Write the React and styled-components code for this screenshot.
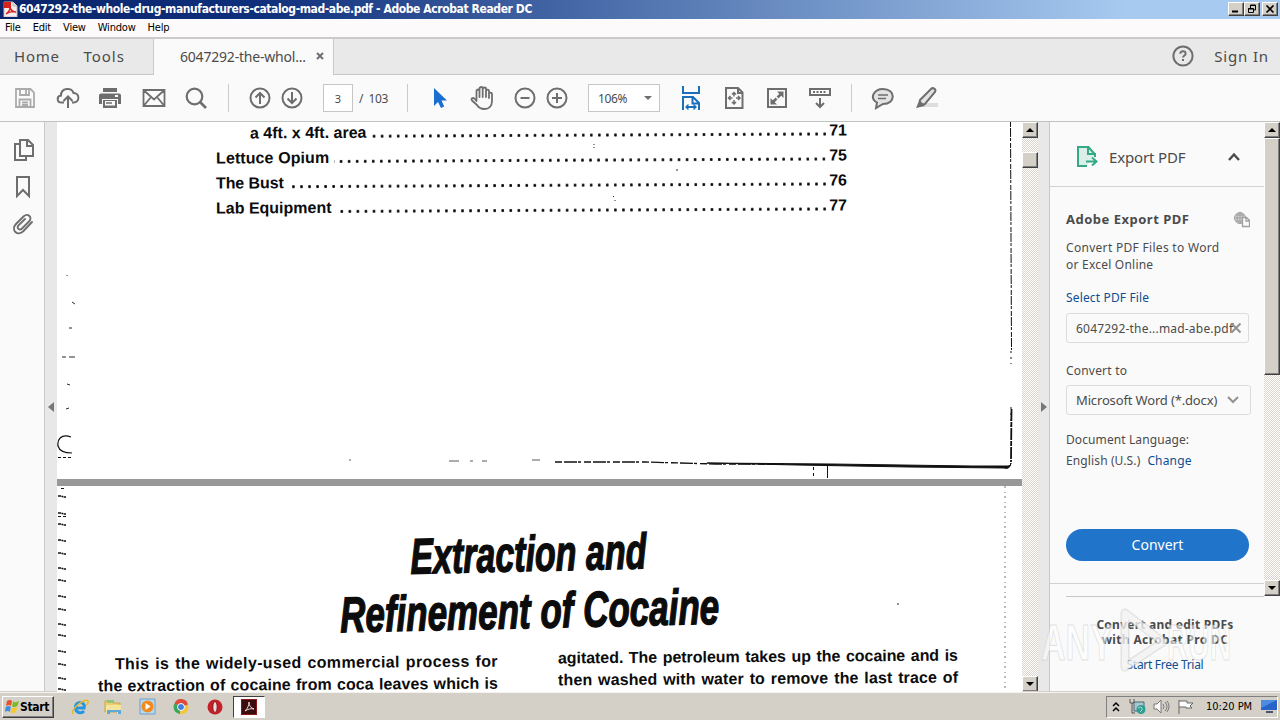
import React from 'react'
import styled, { createGlobalStyle, css } from 'styled-components'

const GlobalStyle = createGlobalStyle`
  * {
    box-sizing: border-box;
  }

  body {
    margin: 0;
    overflow: hidden;
    font-family: 'Noto Sans', 'Open Sans', sans-serif;
    color: #4b4b4b;
  }

  svg {
    display: block;
    flex: none;
  }
`

const Window = styled.div`
  display: flex;
  flex-direction: column;
  width: 1280px;
  height: 720px;
  background: #fafafa;
  white-space: nowrap;
`

const raised = css`
  background: #d4d0c8;
  border: 1px solid;
  border-color: #fff #404040 #404040 #fff;
  box-shadow: inset -1px -1px 0 #808080;
`

const Text = styled.span`
  font-size: ${p => p.size || 13}px;
  font-weight: ${p => p.weight || 400};
  letter-spacing: ${p => p.spacing || 0}px;
  color: ${p => p.color || '#4b4b4b'};
  margin-left: ${p => p.left || 0}px;
`

/* Title bar and menu */

const TitleBar = styled.header`
  display: flex;
  align-items: center;
  height: 19px;
  padding: 0 2px 1px 3px;
  background: linear-gradient(90deg, #0a246a 0%, #0f2f7c 20%, #a6caf0 88%);
`

const WindowTitle = styled.h1`
  flex: 1;
  margin: 0 0 0 1px;
  font: 700 12px 'DejaVu Sans Condensed', 'DejaVu Sans', sans-serif;
  font-stretch: condensed;
  letter-spacing: -0.4px;
  color: #fff;
`

const WindowButton = styled.button`
  ${raised};
  display: flex;
  align-items: center;
  justify-content: center;
  width: 16px;
  height: 14px;
  padding: 0;
  margin-left: ${p => p.gap || 0}px;
`

const MenuBar = styled.nav`
  display: flex;
  align-items: center;
  height: 20px;
  padding: 0 5px 2px;
  gap: 12px;
  border-bottom: 2px solid #cbcbcb;
  background: #fcfafa;
  font: 11px 'DejaVu Sans Condensed', sans-serif;
  font-stretch: condensed;
  letter-spacing: -0.2px;
  color: #000;
`

/* Tabs */

const TabBar = styled.div`
  display: flex;
  height: 36px;
  background: #e9e9e9;
`

const TabGroup = styled.div`
  display: flex;
  align-items: center;
  width: ${p => p.width ? `${p.width}px` : 'auto'};
  flex: ${p => p.width ? 'none' : 1};
  justify-content: ${p => p.end ? 'flex-end' : 'flex-start'};
  padding: 0 11px 2px 14px;
  border-bottom: 1px solid #c6c6c6;
`

const ActiveTab = styled.div`
  display: flex;
  align-items: center;
  width: 181px;
  padding: 0 9px 2px 26px;
  justify-content: space-between;
  background: #fafafa;
  border: solid #c9c9c9;
  border-width: 0 1px;
`

/* Toolbar */

const Toolbar = styled.div`
  display: flex;
  align-items: center;
  height: 47px;
  padding-left: 12px;
  border-bottom: 1px solid #bfc3bf;
  color: #6e6e6e;
`

const Tool = styled.button`
  display: flex;
  align-items: center;
  justify-content: center;
  width: 26px;
  height: 32px;
  padding: 0;
  border: 0;
  background: none;
  color: ${p => p.color || 'inherit'};
  margin-left: ${p => p.gap || 0}px;
`

const Divider = styled.span`
  width: 1px;
  height: 28px;
  background: #cacaca;
  margin-left: ${p => p.gap}px;
`

const Field = styled.div`
  display: flex;
  align-items: center;
  justify-content: ${p => p.spread ? 'space-between' : 'center'};
  width: ${p => p.width}px;
  height: 28px;
  padding: 0 ${p => p.spread ? 7 : 0}px 0 ${p => p.spread ? 9 : 0}px;
  margin-left: ${p => p.gap}px;
  border: 1px solid #c6c6c6;
  background: #fff;
`

/* Workspace */

const Main = styled.main`
  display: flex;
  height: 570px;
`

const SideRail = styled.aside`
  display: flex;
  flex-direction: column;
  align-items: center;
  gap: 13px;
  width: 45px;
  padding: 16px 0 0 2px;
  border-right: 1px solid #c8c8c8;
`

const Gutter = styled.div`
  display: flex;
  align-items: center;
  justify-content: center;
  width: ${p => p.width}px;
  background: #e8e8e8;
`

const ScrollTrack = styled.div`
  display: flex;
  flex-direction: column;
  width: 16px;
  height: ${p => p.height}px;
  background: repeating-conic-gradient(#d8d3cb 0 25%, #fff 0 50%) 0 0 / 2px 2px;
`

const ScrollButton = styled.button`
  ${raised};
  display: flex;
  align-items: center;
  justify-content: center;
  width: 16px;
  height: 16px;
  padding: 0;
  margin-top: ${p => p.end ? 'auto' : 0};
`

const Thumb = styled.div`
  ${raised};
  height: ${p => p.height}px;
  margin-top: ${p => p.offset}px;
`

const Document = styled.section`
  position: relative;
  width: 965px;
  overflow: hidden;
  background: #fff;
  color: #0c0c0c;
  font-family: 'Liberation Sans', Arial, sans-serif;
  font-weight: 700;
`

const ContentsPage = styled.div`
  height: 357px;
  padding-left: 159px;
`

const ContentsRow = styled.div`
  display: flex;
  align-items: baseline;
  width: 631px;
  height: 25.1px;
  padding-left: ${p => p.indent || 0}px;
  font-size: 16px;
  line-height: 20px;
  letter-spacing: ${p => p.spacing || 0}px;
  transform: rotate(-0.28deg);
`

const Leader = styled.span`
  flex: 1;
  height: 3px;
  margin: 0 1px 0 ${p => p.gap}px;
  background: radial-gradient(circle at 50% 50%, #0c0c0c 1.2px, transparent 1.7px) right 0 / 8.06px 3px repeat-x;
`

const PageNumber = styled.span`
  letter-spacing: 0;
`

const PageGap = styled.div`
  height: 7px;
  background: #989898;
`

const ScanMarks = styled.svg`
  position: absolute;
  top: 0;
  left: 0;
`

const ArticlePage = styled.div`
  padding-top: 40px;
`

const ArticleTitle = styled.h2`
  width: 660px;
  height: 116px;
  margin: 0 0 0 142px;
  font-size: 50px;
  line-height: 57px;
  font-style: italic;
  font-weight: 700;
  text-align: center;
  transform: rotate(-1.3deg);
`

const TitleLine = styled.span`
  display: block;
  -webkit-text-stroke: 1.4px #0c0c0c;
  transform: scaleX(${p => p.stretch});
`

const Columns = styled.div`
  display: flex;
  gap: 60px;
  padding-left: 41px;
`

const Column = styled.div`
  width: 400px;
  margin-top: ${p => p.top}px;
  transform: rotate(-0.4deg);
`

const Line = styled.p`
  margin: 0;
  padding-left: ${p => p.indent || 0}px;
  font-size: 16px;
  line-height: 22px;
  letter-spacing: ${p => p.spacing || 0}px;
  text-align-last: justify;
`

/* Export panel */

const Panel = styled.aside`
  position: relative;
  width: 215px;
  border-left: 1px solid #c8c8c8;
`

const PanelHeader = styled.div`
  display: flex;
  align-items: center;
  height: 65px;
  padding: 5px 23px 0 26px;
  border-bottom: 1px solid #d2d2d2;
`

const PanelBody = styled.div`
  display: flex;
  flex-direction: column;
  height: 397px;
  padding: 21px 14px 0 16px;
  border-bottom: 1px solid #d2d2d2;
`

const PanelRow = styled.div`
  display: flex;
  align-items: center;
  justify-content: ${p => p.spread ? 'space-between' : 'flex-start'};
  height: ${p => p.height || 17}px;
  margin-top: ${p => p.top || 0}px;
`

const Box = styled.div`
  display: flex;
  flex: none;
  align-items: center;
  justify-content: space-between;
  width: ${p => p.width}px;
  height: 30px;
  margin-top: ${p => p.top}px;
  padding: 0 ${p => p.end}px 0 9px;
  border: 1px solid #dcdcdc;
  border-radius: 3px;
`

const ConvertButton = styled.button`
  width: 183px;
  height: 32px;
  margin-top: 60px;
  padding: 0 0 1px;
  border: 0;
  border-radius: 16px;
  background: #2074ca;
  color: #fff;
  font: 14px 'Noto Sans', sans-serif;
`

const Promo = styled.div`
  display: flex;
  flex-direction: column;
  align-items: center;
  margin: 12px 0 0 16px;
  padding-top: 20px;
  border-top: 1px solid #c8c8c8;
  line-height: 15px;
`

const PromoLink = styled.a`
  margin-top: 10px;
  font-size: 12px;
  letter-spacing: -0.3px;
  color: #0d4f8f;
`

const Watermark = styled.svg`
  position: absolute;
  left: -12px;
  top: 484px;
`

/* Taskbar */

const Taskbar = styled.footer`
  display: flex;
  align-items: center;
  height: 28px;
  padding: 0 2px;
  border-top: 1px solid #f5f3ef;
  box-shadow: 0 -1px 0 #d4d0c8;
  background: #d4d0c8;
  color: #000;
`

const StartButton = styled.button`
  ${raised};
  display: flex;
  align-items: center;
  width: 52px;
  height: 22px;
  padding: 0 2px;
  font: 700 12px 'DejaVu Sans Condensed', sans-serif;
  font-stretch: condensed;
  letter-spacing: -0.3px;
`

const Launcher = styled.div`
  display: flex;
  align-items: center;
  justify-content: center;
  width: 32px;
  height: 22px;
  margin-left: ${p => p.gap || 0}px;
  ${p => p.active && css`
    background: #fff;
    border: 1px solid;
    border-color: #404040 #fff #fff #404040;
  `}
`

const Tray = styled.div`
  display: flex;
  align-items: center;
  width: 172px;
  height: 22px;
  margin-left: auto;
  padding: 0 1px 0 4px;
  border: 1px solid;
  border-color: #808080 #fff #fff #808080;
`

const Clock = styled.time`
  margin: 0 9px 0 12px;
  font: 11px 'DejaVu Sans Condensed', sans-serif;
  font-stretch: condensed;
`

const TrayIcon = styled.svg`
  margin-left: ${p => p.$gap || 0}px;
`

const Icon = ({ w = 24, h = 24, sw = 2, fill = 'none', children, ...rest }) => (
  <svg width={w} height={h} viewBox={`0 0 ${w} ${h}`} fill={fill} stroke="currentColor" strokeWidth={sw} {...rest}>
    {children}
  </svg>
)

const Triangle = ({ d, color = '#000', w = 8, h = 8 }) => (
  <svg width={w} height={h} viewBox={`0 0 ${w} ${h}`}><path d={d} fill={color} /></svg>
)

const PdfIcon = () => (
  <svg width="15" height="16" viewBox="0 0 15 16">
    <path d="M1 1h9l4 4v11H1z" fill="#f6eeee" stroke="#c9b9b9" />
    <path d="M0 1h8v6H0z" fill="#d8231c" />
    <path d="M3 13c3-2 4-5 4-7 1 4 3 5 6 5-4-1-7 0-10 2z" stroke="#d8231c" strokeWidth="1.400" fill="none" />
    <path d="M10 1v4h4" fill="#ddd" stroke="#bbb" />
  </svg>
)

const contents = [
  { label: 'a 4ft. x 4ft. area', page: 71, indent: 34, spacing: 0, gap: 1 },
  { label: 'Lettuce Opium', page: 75, spacing: 0.1, gap: 5 },
  { label: 'The Bust', page: 76, spacing: -0.1, gap: 3 },
  { label: 'Lab Equipment', page: 77, spacing: 0, gap: 3 },
]

// edge residue down the left side of the second page
const edgeMarks = [375, 392, 403, 419, 432, 447, 459, 475, 488, 503, 514, 530, 543, 557, 568]

function Titles() {
  return (
    <>
      <TitleBar>
        <PdfIcon />
        <WindowTitle>6047292-the-whole-drug-manufacturers-catalog-mad-abe.pdf - Adobe Acrobat Reader DC</WindowTitle>
        <WindowButton><Icon w={10} h={8} stroke="#000"><path d="M1 6.500h6" /></Icon></WindowButton>
        <WindowButton>
          <Icon w={10} h={10} sw={1} stroke="#000"><path d="M3.500 4V1h5v5H6M3 1.500h6M1.500 4.500h5v4h-5zM1 5h6" /></Icon>
        </WindowButton>
        <WindowButton gap={2}><Icon w={10} h={8} sw={1.600} stroke="#000"><path d="M1.500.5l7 7m0-7l-7 7" /></Icon></WindowButton>
      </TitleBar>
      <MenuBar>
        <span>File</span><span>Edit</span><span>View</span><span>Window</span><span>Help</span>
      </MenuBar>
      <TabBar>
        <TabGroup width={153}>
          <Text size={15} spacing={0.8}>Home</Text>
          <Text size={15} spacing={1} left={23.5}>Tools</Text>
        </TabGroup>
        <ActiveTab>
          <Text size={14} spacing={-0.2}>6047292-the-whol...</Text>
          <Icon w={8} h={8} color="#6e6e6e"><path d="M1 1l6 6m0-6l-6 6" /></Icon>
        </ActiveTab>
        <TabGroup end>
          <Icon w={22} h={22} color="#6e6e6e">
            <circle cx="11" cy="11" r="9.600" />
            <path d="M8.300 8.800c0-3.600 5.600-3.400 5.300 0-.2 1.700-2.600 1.700-2.600 3.800M11 14v2" />
          </Icon>
          <Text size={15} spacing={0.85} left={20}>Sign In</Text>
        </TabGroup>
      </TabBar>
    </>
  )
}

function Tools() {
  return (
    <Toolbar>
      <Tool color="#ababab">
        <Icon w={22} h={22} sw={1.800}><path d="M2 2h14.500L20 5.500V20H2zM6 2v6h9V2M12 3v4M5.500 20v-7.500h11V20M8 15.500h6M8 18h6" /></Icon>
      </Tool>
      <Tool gap={17}>
        <Icon><path d="M8 16.500H5.500C.5 16.500.5 10 5 9.500 5 1.500 16 1 17.500 7c6.500 0 6.500 9.500 0 9.500H16M12 22V10.500M7.500 15l4.500-4.500 4.500 4.500" /></Icon>
      </Tool>
      <Tool gap={16}>
        <Icon w={22} h={22} fill="currentColor" stroke="none">
          <path d="M4 1h14v4H4zM2 6.500h18a2 2 0 0 1 2 2V17h-3v-5H3v5H0V8.500a2 2 0 0 1 2-2zM4 13h14v8H4z" />
          <path d="M6 14h10v4.500H6z" fill="#fafafa" />
          <path d="M7 16h6" stroke="currentColor" strokeWidth="1.500" />
          <path d="M16 9h3" stroke="#fafafa" />
        </Icon>
      </Tool>
      <Tool gap={18}>
        <Icon w={24} h={20} sw={1.800}><path d="M1.500 2h21v16h-21zM2 2.500l10 9 10-9M2 17.500L9 9M22 17.500L15 9" /></Icon>
      </Tool>
      <Tool gap={16}>
        <Icon w={22} h={22} sw={2.200}><circle cx="9.500" cy="9.500" r="7.800" /><path d="M15 15l6 6" strokeWidth="2.600" /></Icon>
      </Tool>
      <Divider gap={19} />
      <Tool gap={18}><Icon><circle cx="12" cy="12" r="9.500" /><path d="M12 18V7M7.500 11.500L12 7l4.500 4.500" /></Icon></Tool>
      <Tool gap={6}><Icon><circle cx="12" cy="12" r="9.500" /><path d="M12 6v11M7.500 12.500L12 17l4.500-4.500" /></Icon></Tool>
      <Field width={30} gap={18}><Text size={11}>3</Text></Field>
      <Text size={12} spacing={-0.4} left={6}>/&nbsp; 103</Text>
      <Divider gap={19} />
      <Tool gap={19} color="#1b6fd0">
        <Icon w={14} h={22} fill="currentColor" stroke="none"><path d="M1 1v18l4-4 3 6 3.200-1.500L8.500 13.500H14z" /></Icon>
      </Tool>
      <Tool gap={16}>
        <Icon w={24} h={26} sw={1.800} strokeLinejoin="round" strokeLinecap="round">
          <path d="M6.500 15V6c0-2 3-2 3 0v6M9.500 6V3.500c0-2 3.200-2 3.200 0V12M12.700 4c0-2 3.300-2 3.300 0v8M16 6c0-1.800 3-1.800 3 0v7M19 9c0-1.800 3-1.800 3 0v7c0 5-3 8-7.500 8-4 0-6-1.500-7.500-4L2 15.500c-1.300-2 .8-3.200 2.300-2L6.500 16" />
        </Icon>
      </Tool>
      <Tool gap={17}><Icon><circle cx="12" cy="12" r="9.500" /><path d="M7.500 12h9" /></Icon></Tool>
      <Tool gap={6}><Icon><circle cx="12" cy="12" r="9.500" /><path d="M7 12h10M12 7v10" /></Icon></Tool>
      <Field width={72} gap={18} spread>
        <Text size={12} spacing={-0.3}>106%</Text>
        <Triangle d="M0 2h8L4 6z" color="#6e6e6e" />
      </Field>
      <Tool gap={18} color="#1b6fb8">
        <Icon w={20} h={26}>
          <path d="M2 1v7h16V1M2 25V12h10l6 6v7M11.500 12v6.500H18M5 22h10" />
          <path d="M7.500 19.500L5 22l2.500 2.500M12.500 19.500L15 22l-2.500 2.500" strokeWidth="1.400" />
        </Icon>
      </Tool>
      <Tool gap={17}>
        <Icon w={20} h={24}>
          <path d="M2 2h12l4.500 4.500V22H2zM14 2v5h4" />
          <path d="M10 6.500v4M10 14v4M4.500 12h4M12 12h4M8 8.500l2-2 2 2M8 16l2 2 2-2M6.500 10l-2 2 2 2M14 10l2 2-2 2" strokeWidth="1.500" />
        </Icon>
      </Tool>
      <Tool gap={17}>
        <Icon w={22} h={22}>
          <path d="M2 2h18v18H2z" />
          <path d="M11 4.500h6.500V11zM4.500 11v6.500H11z" fill="currentColor" stroke="none" />
          <path d="M11.500 10.500l3.500-3.500M7 15l3.500-3.500" strokeWidth="2.500" />
        </Icon>
      </Tool>
      <Tool gap={17}>
        <Icon><path d="M2 3h20v6H2zM12 12v9M8 17l4 4 4-4" /><path d="M5 6h14" strokeDasharray="2 1.500" /></Icon>
      </Tool>
      <Divider gap={18} />
      <Tool gap={18}>
        <Icon><path d="M12 3c13 0 13 15 0 15L5 22l1-5.500C-2 12 3 3 12 3z" fill="#e3e3e3" /><path d="M7 9h10M7 12.500h8" strokeWidth="1.500" /></Icon>
      </Tool>
      <Tool gap={17}>
        <Icon>
          <path d="M12 17h12v4H9z" fill="#dedede" stroke="none" />
          <path d="M6 14L17 3c2-2 5.500 0 4 3L11 18c-2 1-6-1-5-4z" fill="#e3e3e3" />
          <path d="M5 15l6 5-9 2z" fill="currentColor" stroke="none" />
        </Icon>
      </Tool>
    </Toolbar>
  )
}

function Pages() {
  return (
    <Document>
      <ContentsPage>
        {contents.map(row => (
          <ContentsRow key={row.page} indent={row.indent} spacing={row.spacing}>
            {row.label}<Leader gap={row.gap} /><PageNumber>{row.page}</PageNumber>
          </ContentsRow>
        ))}
      </ContentsPage>
      <PageGap />
      <ArticlePage>
        <ArticleTitle>
          <TitleLine stretch={0.68}>Extraction and</TitleLine>
          <TitleLine stretch={0.7}>Refinement of Cocaine</TitleLine>
        </ArticleTitle>
        <Columns>
          <Column top={10}>
            <Line indent={17} spacing={0.35}>This is the widely-used commercial process for</Line>
            <Line spacing={0.1}>the extraction of cocaine from coca leaves which is</Line>
          </Column>
          <Column top={4}>
            <Line spacing={-0.05}>agitated. The petroleum takes up the cocaine and is</Line>
            <Line spacing={0.1}>then washed with water to remove the last trace of</Line>
          </Column>
        </Columns>
      </ArticlePage>
      <ScanMarks width="965" height="570" fill="none" stroke="#111">
        <path d="M953.500 0l1 228" strokeDasharray="5 1 9 1 3 2" />
        <path d="M954 229v13M954 285v24" strokeDasharray="2 4" />
        <path d="M954.500 287l-.5 53" strokeWidth="1.800" strokeDasharray="12 1 5 1" />
        <path d="M498 340h90l70 2h70" strokeDasharray="7 2 13 1 3 3" strokeWidth="1.300" />
        <path d="M650 341l125 1 140 2h36q3 0 3-3-1 7-7 5l-95-1-112-2z" fill="#111" />
        <path d="M770.500 343v13" />
        <path d="M756.500 345v11" strokeDasharray="3 3" />
        <path d="M292 338h2M392 339h10M413 339h3M425 339h5M475 338h8" strokeWidth=".7" />
        <path d="M14 315C4 311 0 318 1 324q2 7 14 7" strokeWidth="1.200" />
        <path d="M1 335.500h15M4 366.500h4M1 394.500h8" strokeDasharray="3 2" />
        <path d="M10 153v1M15 180l3 2M12 206h3M5 235h4M12 235h6M10 262l3 1M9 287l3-1M537 22v1M537 25v1M619 48h2M556 74l1 1M558 78v1M840 482h2" strokeWidth=".9" />
        <path d="M948 364v207" strokeDasharray="2 4 1 3" stroke="#777" />
        {edgeMarks.map(y => <path key={y} d={`M1 ${y - 1}h3l3 1h2`} strokeWidth="1.600" strokeDasharray="3 .5 2 .5" />)}
      </ScanMarks>
    </Document>
  )
}

function ExportPanel() {
  return (
    <Panel>
      <PanelHeader>
        <Icon w={22} h={24} color="#35a985">
          <path d="M19 9.500L12.500 2H2v19h9M12 2v7h7v3" fill="#dceee8" />
          <path d="M10 16.500h10M16 12.500l4.500 4-4.500 4" />
        </Icon>
        <Text size={15} spacing={-0.15} left={11}>Export PDF</Text>
        <Icon w={14} h={9} sw={2.400} style={{ marginLeft: 'auto' }}><path d="M2 8l5-5.500L12 8" /></Icon>
      </PanelHeader>
      <PanelBody>
        <PanelRow height={22} spread>
          <Text size={13} weight={700} spacing={0.5}>Adobe Export PDF</Text>
          <Icon w={17} h={17} sw={1} color="#a0a0a0">
            <circle cx="7" cy="7" r="5.500" fill="#d2d2d2" />
            <path d="M1.500 7h11M7 1.500v11M3 4h8M3 10h6M7 1.500c-4 3-4 8 0 11M7 1.500c4 3 4 8 0 11" />
            <path d="M9.500 6.500h4l3 3v6h-7zM13 7v3h3" fill="#fafafa" strokeWidth="1.300" />
          </Icon>
        </PanelRow>
        <PanelRow top={9}><Text size={12} spacing={0.3}>Convert PDF Files to Word</Text></PanelRow>
        <PanelRow><Text size={12} spacing={0.22}>or Excel Online</Text></PanelRow>
        <PanelRow top={16}><Text size={12} color="#0d4f8f" spacing={0.15}>Select PDF File</Text></PanelRow>
        <Box width={183} top={7} end={6}>
          <Text size={12} spacing={0.2}>6047292-the...mad-abe.pdf</Text>
          <Icon w={12} h={12} color="#929292" style={{ marginLeft: -5 }}><path d="M1.500 1.500l9 9m0-9l-9 9" /></Icon>
        </Box>
        <PanelRow top={19}><Text size={12} spacing={0.2}>Convert to</Text></PanelRow>
        <Box width={185} top={6} end={11}>
          <Text size={13} spacing={-0.15}>Microsoft Word (*.docx)</Text>
          <Icon w={12} h={10} color="#929292"><path d="M1 2l5 5 5-5" /></Icon>
        </Box>
        <PanelRow top={16}><Text size={12} spacing={0.1}>Document Language:</Text></PanelRow>
        <PanelRow top={4}>
          <Text size={12} spacing={0.12}>English (U.S.)</Text>
          <Text size={12} color="#0d4f8f" left={7} spacing={0.15}>Change</Text>
        </PanelRow>
        <ConvertButton>Convert</ConvertButton>
      </PanelBody>
      <Promo>
        <Text size={12} weight={700} spacing={0.25}>Convert and edit PDFs</Text>
        <Text size={12} weight={700} spacing={0.35}>with Acrobat Pro DC</Text>
        <PromoLink>Start Free Trial</PromoLink>
      </Promo>
      <Watermark width="210" height="86" viewBox="0 0 210 86">
        <g fill="#fff" fillOpacity=".55" stroke="#aaa" strokeOpacity=".35" fontFamily="Liberation Sans, sans-serif" fontSize="50" fontWeight="700">
          <text x="3" y="54" textLength="72" lengthAdjust="spacingAndGlyphs">ANY</text>
          <text x="129" y="54" textLength="64" lengthAdjust="spacingAndGlyphs">RUN</text>
        </g>
        <path d="M87 7l38 29-38 25z" fill="none" stroke="#ccc" strokeOpacity=".5" strokeWidth="9" strokeLinejoin="round" />
        <path d="M87 7l38 29-38 25z" fill="none" stroke="#fff" strokeOpacity=".6" strokeWidth="6" strokeLinejoin="round" />
      </Watermark>
    </Panel>
  )
}

function Start() {
  return (
    <Taskbar>
      <StartButton>
        <svg width="15" height="15" viewBox="0 0 15 15">
          <path d="M2 2q3-2 5 0L6 7Q4 5 1 7z" fill="#e5532d" />
          <path d="M8 2.500q3 1.500 6-.5l-1.500 5q-3 2-5.500.5z" fill="#7fba2c" />
          <path d="M.8 8q3-2 5 0l-1 5q-2-2-5 0z" fill="#3f8fdc" />
          <path d="M7 8.500q2 1.500 5.300-.5L11 13q-3 2-5.200.5z" fill="#f8c92b" />
        </svg>
        Start
      </StartButton>
      <Launcher gap={10}>
        <svg width="18" height="18" viewBox="0 0 18 18" fill="none">
          <path d="M14.500 10H4.500c0 5 6 6 8.500 3M4.500 9c0-6 9-6 9 0" stroke="#2696df" strokeWidth="3" />
          <path d="M2 16C-1 12 14-1 17 3q1 2-2 4" stroke="#e7b928" strokeWidth="1.500" />
        </svg>
      </Launcher>
      <Launcher gap={1}>
        <svg width="18" height="18" viewBox="0 0 18 18">
          <path d="M1 3h6l2 2h7v9H1z" fill="#ecd06c" stroke="#c8a845" />
          <path d="M3 2h7v3H3z" fill="#8bc776" />
          <path d="M2 7h15v9h-4v-4H6v4H2z" fill="#f4e49c" />
          <path d="M3 12h14v4h-3v-2H6v2H3z" fill="#5fa9d6" />
        </svg>
      </Launcher>
      <Launcher gap={2}>
        <svg width="17" height="17" viewBox="0 0 17 17">
          <path d="M1 1h15v15H1z" fill="#b9d8ee" stroke="#6c9ec9" />
          <circle cx="8.500" cy="8.500" r="6" fill="#f28a1c" />
          <path d="M6.500 5v7l5-3.500z" fill="#fff" />
        </svg>
      </Launcher>
      <Launcher gap={2}>
        <svg width="16" height="16" viewBox="0 0 16 16">
          <path d="M8 8L1.500 4.500A7 7 0 0 1 15 6z" fill="#de4b3b" />
          <path d="M8 8L1.500 4.500A7 7 0 0 0 7 15z" fill="#3aa757" />
          <path d="M8 8l7-2.500A7 7 0 0 1 7 15z" fill="#f5c63a" />
          <circle cx="8" cy="8" r="3.500" fill="#3f7fe0" stroke="#fff" />
        </svg>
      </Launcher>
      <Launcher gap={2}>
        <svg width="16" height="16" viewBox="0 0 16 16">
          <circle cx="8" cy="8" r="7.500" fill="#c51f27" />
          <ellipse cx="8" cy="8" rx="2.200" ry="5.500" fill="#e8dcda" stroke="#8d1117" />
        </svg>
      </Launcher>
      <Launcher gap={2} active>
        <svg width="16" height="16" viewBox="0 0 16 16">
          <path d="M0 0h16v16H0z" fill="#3c0d0e" stroke="#8d1716" strokeWidth="2" />
          <path d="M4 12c3-3 4-6 4-9 0 4 2 6 5 7-3-.8-6 0-9 2z" fill="none" stroke="#e8d9d8" />
        </svg>
      </Launcher>
      <Tray>
        <Icon w={10} h={12} sw={1.500} stroke="#000"><path d="M2 5l3-3 3 3M2 10l3-3 3 3" /></Icon>
        <TrayIcon $gap={8} width="17" height="17" viewBox="0 0 17 17">
          <path d="M5 4h10v9H5z" fill="#a4c8d4" stroke="#4c6670" />
          <path d="M1 1v4h4V1M3 5v10h3" fill="none" stroke="#555" />
          <circle cx="12" cy="11.500" r="4.500" fill="#2e9e92" />
          <path d="M9 10q3-2 4 0t-2 4" stroke="#a5ddcd" fill="none" />
        </TrayIcon>
        <TrayIcon $gap={7} width="17" height="15" viewBox="0 0 17 15" fill="none" stroke="#777">
          <path d="M1 5h3l4-4v13l-4-4H1z" fill="#f8f8f8" />
          <path d="M10 5q2 2.500 0 5M12 3q4 4.500 0 9M14 2q4 5 0 11" />
        </TrayIcon>
        <TrayIcon $gap={7} width="17" height="16" viewBox="0 0 17 16" fill="#fff" stroke="#666">
          <path d="M2 1v14M2 2h8v2h6l-3 3 2 2H9V8H2" />
        </TrayIcon>
        <Clock>10:20 PM</Clock>
        <svg width="16" height="15" viewBox="0 0 16 15">
          <path d="M0 1h16v10H0z" fill="#2864c8" />
          <path d="M0 1h16L0 9z" fill="#4d8ce3" />
          <path d="M5 12h7v2H5z" fill="#4b5567" />
        </svg>
      </Tray>
    </Taskbar>
  )
}

export default function App() {
  return (
    <Window>
      <GlobalStyle />
      <Titles />
      <Tools />
      <Main>
        <SideRail>
          <Icon w={22} h={24} color="#6e6e6e"><path d="M8 2h8l5 5v11H8zM15 2v6h6M8 6H3v16h11v-4" /></Icon>
          <Icon w={16} h={24} color="#6e6e6e"><path d="M2 2h12v19l-6-6-6 6z" /></Icon>
          <Icon w={22} h={24} sw={1.900} color="#6e6e6e" strokeLinecap="round">
            <path d="M20 10l-8.500 9c-6 6-13-1-7.500-7l7.500-7.500c4.500-4 9.500 1 5.500 5L10 16.500c-2.500 2.500-6-.5-3.500-3.200L13 7" />
          </Icon>
        </SideRail>
        <Gutter width={12}><Triangle d="M7 0v10L1 5z" w={8} h={10} color="#777" /></Gutter>
        <Pages />
        <ScrollTrack height={570}>
          <ScrollButton><Triangle d="M0 6h8L4 2z" /></ScrollButton>
          <Thumb height={16} offset={14} />
          <ScrollButton end><Triangle d="M0 2h8L4 6z" /></ScrollButton>
        </ScrollTrack>
        <Gutter width={11}><Triangle d="M1 0v10l6-5z" w={8} h={10} color="#777" /></Gutter>
        <ExportPanel />
        <ScrollTrack height={474}>
          <ScrollButton><Triangle d="M0 6h8L4 2z" /></ScrollButton>
          <Thumb height={237} offset={0} />
          <ScrollButton end><Triangle d="M0 2h8L4 6z" /></ScrollButton>
        </ScrollTrack>
      </Main>
      <Start />
    </Window>
  )
}
